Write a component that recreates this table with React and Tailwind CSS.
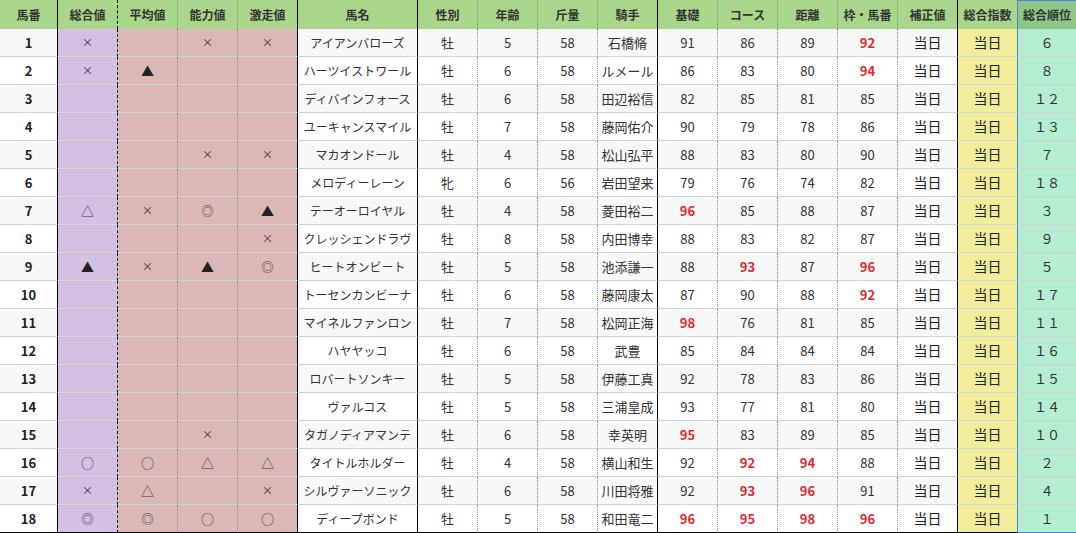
import React from 'react';

const HEAD = ['馬番', '総合値', '平均値', '能力値', '激走値', '馬名', '性別', '年齢', '斤量', '騎手', '基礎', 'コース', '距離', '枠・馬番', '補正値', '総合指数', '総合順位'];

// right border per column
const RB = [
  'border-r border-r-black',
  'border-r border-r-black [border-right-style:dashed]',
  'border-r border-r-[#8c8c8c] [border-right-style:dotted]',
  'border-r border-r-[#8c8c8c] [border-right-style:dotted]',
  'border-r border-r-black',
  'border-r border-r-black',
  'border-r border-r-[#8c8c8c] [border-right-style:dotted]',
  'border-r border-r-[#8c8c8c] [border-right-style:dotted]',
  'border-r border-r-[#8c8c8c] [border-right-style:dotted]',
  'border-r border-r-black',
  'border-r border-r-[#8c8c8c] [border-right-style:dotted]',
  'border-r border-r-[#8c8c8c] [border-right-style:dotted]',
  'border-r border-r-[#8c8c8c] [border-right-style:dotted]',
  'border-r border-r-[#8c8c8c] [border-right-style:dotted]',
  'border-r border-r-black',
  'border-r border-r-[#4a86e8]',
  '',
];

// [総合, 平均, 能力, 激走, 馬名, 性別, 年齢, 斤量, 騎手, 基礎, コース, 距離, 枠, 順位] ; '*' = red
const ROWS = [
  ['×', '', '×', '×', 'アイアンバローズ', '牡', 5, 58, '石橋脩', '91', '86', '89', '92*', '６'],
  ['×', '▲', '', '', 'ハーツイストワール', '牡', 6, 58, 'ルメール', '86', '83', '80', '94*', '８'],
  ['', '', '', '', 'ディバインフォース', '牡', 6, 58, '田辺裕信', '82', '85', '81', '85', '１２'],
  ['', '', '', '', 'ユーキャンスマイル', '牡', 7, 58, '藤岡佑介', '90', '79', '78', '86', '１３'],
  ['', '', '×', '×', 'マカオンドール', '牡', 4, 58, '松山弘平', '88', '83', '80', '90', '７'],
  ['', '', '', '', 'メロディーレーン', '牝', 6, 56, '岩田望来', '79', '76', '74', '82', '１８'],
  ['△', '×', '◎', '▲', 'テーオーロイヤル', '牡', 4, 58, '菱田裕二', '96*', '85', '88', '87', '３'],
  ['', '', '', '×', 'クレッシェンドラヴ', '牡', 8, 58, '内田博幸', '88', '83', '82', '87', '９'],
  ['▲', '×', '▲', '◎', 'ヒートオンビート', '牡', 5, 58, '池添謙一', '88', '93*', '87', '96*', '５'],
  ['', '', '', '', 'トーセンカンビーナ', '牡', 6, 58, '藤岡康太', '87', '90', '88', '92*', '１７'],
  ['', '', '', '', 'マイネルファンロン', '牡', 7, 58, '松岡正海', '98*', '76', '81', '85', '１１'],
  ['', '', '', '', 'ハヤヤッコ', '牡', 6, 58, '武豊', '85', '84', '84', '84', '１６'],
  ['', '', '', '', 'ロバートソンキー', '牡', 5, 58, '伊藤工真', '92', '78', '83', '86', '１５'],
  ['', '', '', '', 'ヴァルコス', '牡', 5, 58, '三浦皇成', '93', '77', '81', '80', '１４'],
  ['', '', '×', '', 'タガノディアマンテ', '牡', 6, 58, '幸英明', '95*', '83', '89', '85', '１０'],
  ['○', '○', '△', '△', 'タイトルホルダー', '牡', 4, 58, '横山和生', '92', '92*', '94*', '88', '２'],
  ['×', '△', '', '×', 'シルヴァーソニック', '牡', 6, 58, '川田将雅', '92', '93*', '96*', '91', '４'],
  ['◎', '◎', '○', '○', 'ディープボンド', '牡', 5, 58, '和田竜二', '96*', '95*', '98*', '96*', '１'],
];

const GRID = 'grid grid-cols-[58px_60px_60px_60px_60px_120px_60px_60px_60px_60px_60px_60px_60px_60px_60px_60px_58px]';

function Mark({ v }) {
  if (!v) return null;
  if (v === '×') return <span className="text-[11px] text-[#333]">×</span>;
  if (v === '▲') return <span className="text-[13px] text-[#222]">▲</span>;
  if (v === '◎') return <span className="text-[12px] text-[#444]">◎</span>;
  return <span className="text-[13px] text-[#444]">{v}</span>;
}

function Score({ v }) {
  if (v.endsWith('*')) return <span className="font-bold text-[#e3262f]">{v.slice(0, -1)}</span>;
  return <span className="text-[#333]">{v}</span>;
}

export default function App() {
  return (
    <div className="w-[1076px] h-[533px] overflow-hidden bg-white text-[13px] text-[#333]" style={{ fontFamily: '"Noto Sans CJK JP", "Noto Sans", sans-serif' }}>
      <div className={GRID + ' h-[29px]'}>
        {HEAD.map((h, i) => (
          <div
            key={h}
            className={`${RB[i]} flex items-center justify-center font-bold text-[12px] text-[#333] ${i === 16 ? 'bg-[#8ec687] border-t border-t-[#4a86e8]' : 'bg-[#a9d68a]'}`}
          >
            {h}
          </div>
        ))}
      </div>
      {ROWS.map((r, idx) => {
        const last = idx === ROWS.length - 1;
        const plain = idx % 2 === 0 ? 'bg-[#f8f8f8]' : 'bg-white';
        const bb = last ? 'border-b border-b-black' : 'border-b border-b-[#d4d4d4]';
        const cell = 'flex items-center justify-center ' + bb;
        return (
          <div key={idx} className={GRID + ' h-[28px]'}>
            <div className={`${cell} ${RB[0]} ${plain} font-bold text-[#222]`}>{idx + 1}</div>
            <div className={`${cell} ${RB[1]} bg-[#d4c0e3]`}><Mark v={r[0]} /></div>
            <div className={`${cell} ${RB[2]} bg-[#dbb8b7]`}><Mark v={r[1]} /></div>
            <div className={`${cell} ${RB[3]} bg-[#dbb8b7]`}><Mark v={r[2]} /></div>
            <div className={`${cell} ${RB[4]} bg-[#dbb8b7]`}><Mark v={r[3]} /></div>
            <div className={`${cell} ${RB[5]} ${plain} text-[12px] text-[#333] whitespace-nowrap`}>{r[4]}</div>
            <div className={`${cell} ${RB[6]} ${plain}`}>{r[5]}</div>
            <div className={`${cell} ${RB[7]} ${plain}`}>{r[6]}</div>
            <div className={`${cell} ${RB[8]} ${plain}`}>{r[7]}</div>
            <div className={`${cell} ${RB[9]} ${plain} whitespace-nowrap`}>{r[8]}</div>
            <div className={`${cell} ${RB[10]} ${plain}`}><Score v={r[9]} /></div>
            <div className={`${cell} ${RB[11]} ${plain}`}><Score v={r[10]} /></div>
            <div className={`${cell} ${RB[12]} ${plain}`}><Score v={r[11]} /></div>
            <div className={`${cell} ${RB[13]} ${plain}`}><Score v={r[12]} /></div>
            <div className={`${cell} ${RB[14]} ${plain} text-[14px] text-[#222]`}>当日</div>
            <div className={`${cell} ${RB[15]} bg-[#f0ed9b] text-[14px] text-[#222]`}>当日</div>
            <div className={`flex items-center justify-center ${last ? 'border-b border-b-[#4a86e8]' : 'border-b border-b-[#d4d4d4]'} bg-[#b5edd3] text-[13px] text-[#333]`}>{r[13]}</div>
          </div>
        );
      })}
    </div>
  );
}
